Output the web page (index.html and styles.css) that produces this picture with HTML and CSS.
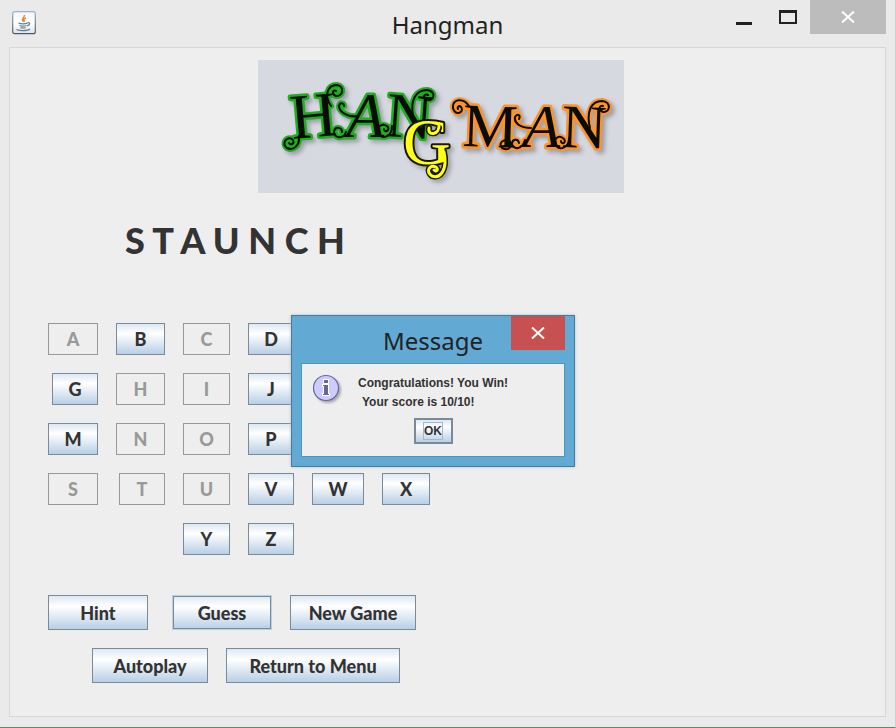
FILE: index.html
```html
<!DOCTYPE html>
<html lang="en">
<head>
<meta charset="utf-8">
<title>Hangman</title>
<link rel="stylesheet" href="styles.css">
</head>
<body>
<div class="window">
  <header class="titlebar">
    <svg class="app-icon" viewBox="0 0 24 24" aria-hidden="true">
      <defs><linearGradient id="tile" x2="0" y2="1"><stop offset="0" stop-color="#f4f6f8"/><stop offset=".5" stop-color="#fff"/><stop offset="1" stop-color="#dfe3e8"/></linearGradient>
      <linearGradient id="edge" x2="0" y2="1"><stop offset="0" stop-color="#9db3c6"/><stop offset="1" stop-color="#475a70"/></linearGradient></defs>
      <rect x=".7" y=".7" width="22.6" height="22" rx="2" fill="url(#tile)" stroke="url(#edge)" stroke-width="1.2"/>
      <path d="M12.500 4c0 3-3 3.500-2 5.500l1 1M14 7c-3 1-2.500 2-1.500 4" fill="none" stroke="#e58a3c" stroke-width="1.5"/>
      <path d="M6.500 12.200c3 .8 6 .8 9 0M7.500 14.500c2 .7 5 .7 7 0M8.500 16.700c2 .5 3 .5 5 0M15.500 11.800c3-1 3 2.200-.5 3M5 18c-1 2 11 2.200 13 0" fill="none" stroke="#5f8298" stroke-width="1.2"/>
    </svg>
    <h1 class="title">Hangman</h1>
    <div class="controls">
      <button class="control" aria-label="Minimize"><svg width="16" height="18" viewBox="0 0 16 18"><path d="M0 15.500h16" stroke="#222" stroke-width="3"/></svg></button>
      <button class="control" aria-label="Maximize"><svg width="18" height="14" viewBox="0 0 18 14"><path d="M1 0v14M17 0v14M0 13h18" stroke="#222" stroke-width="2"/><path d="M0 1.500h18" stroke="#222" stroke-width="3"/></svg></button>
      <button class="control close" aria-label="Close"><svg width="14" height="12" viewBox="0 0 14 12"><path d="M1 .5l12 11M13 .5l-12 11" stroke="#fff" stroke-width="2"/></svg></button>
    </div>
  </header>

  <main class="game">
    <svg class="logo" viewBox="0 0 366 133" role="img" aria-label="Hangman">
      <g class="shade">
        <g class="green">
          <path class="rim" d="M41 76C42 86 35 91 29 88C23 83 29 76 34 79C38 83 33 86 31 83M73 46C66 36 69 25 79 25C87 26 85 37 78 36C73 34 75 29 78 31M88 72C85 80 76 78 76 72C77 66 84 67 84 72M100 56C89 58 81 51 81 46C82 42 86 43 86 46M155 56C152 40 158 30 169 30C179 31 176 42 169 40C164 38 166 33 170 35M134 66C134 78 124 79 120 74C117 67 125 62 130 67C132 71 126 73 126 69"/>
          <text x="34" y="79" transform="rotate(-5 34 79)">H</text>
          <text class="lean" x="88" y="77">A</text>
          <text x="127" y="76" transform="rotate(4 127 76)">N</text>
          <path class="curl" d="M41 76C42 86 35 91 29 88C23 83 29 76 34 79C38 83 33 86 31 83M73 46C66 36 69 25 79 25C87 26 85 37 78 36C73 34 75 29 78 31M88 72C85 80 76 78 76 72C77 66 84 67 84 72M100 56C89 58 81 51 81 46C82 42 86 43 86 46M155 56C152 40 158 30 169 30C179 31 176 42 169 40C164 38 166 33 170 35M134 66C134 78 124 79 120 74C117 67 125 62 130 67C132 71 126 73 126 69"/>
        </g>
        <g class="orange">
          <path class="rim" d="M211 46C205 37 194 39 195 48C197 57 207 52 203 47C201 45 199 47 200 49M249 76C257 88 250 91 244 88C240 83 246 78 250 82M267 80C264 90 256 90 254 84C254 79 260 78 261 83M273 68C262 68 256 63 257 57C259 53 263 55 261 59M332 68C328 52 333 41 344 41C354 42 352 53 345 52C340 50 341 45 345 46M311 78C311 87 303 91 298 86C294 79 301 74 306 79C309 83 303 85 303 81"/>
          <text x="204" y="86" transform="rotate(2 204 86)">M</text>
          <text class="lean" x="265" y="87">A</text>
          <text x="303" y="87" transform="rotate(2 303 87)">N</text>
          <path class="curl" d="M211 46C205 37 194 39 195 48C197 57 207 52 203 47C201 45 199 47 200 49M249 76C257 88 250 91 244 88C240 83 246 78 250 82M267 80C264 90 256 90 254 84C254 79 260 78 261 83M273 68C262 68 256 63 257 57C259 53 263 55 261 59M332 68C328 52 333 41 344 41C354 42 352 53 345 52C340 50 341 45 345 46M311 78C311 87 303 91 298 86C294 79 301 74 306 79C309 83 303 85 303 81"/>
        </g>
        <g class="yellow">
          <path class="tail-rim" d="M186 92C190 110 182 119 174 116C167 111 172 104 178 107C181 110 178 112 176 110"/>
          <text x="145" y="104">G</text>
          <path class="tail" d="M186 92C190 110 182 119 174 116C167 111 172 104 178 107C181 110 178 112 176 110"/>
          <path class="tail-rim" d="M181 68C179 76 169 74 171 68"/>
          <path class="tail" d="M181 64C182 76 169 76 171 68"/>
        </g>
      </g>
    </svg>

    <p class="word">S T A U N C H</p>

    <div class="letters">
      <button class="key first" disabled>A</button><button class="key">B</button><button class="key" disabled>C</button><button class="key">D</button>
      <button class="key first slim">G</button><button class="key" disabled>H</button><button class="key" disabled>I</button><button class="key">J</button>
      <button class="key first">M</button><button class="key" disabled>N</button><button class="key" disabled>O</button><button class="key">P</button>
      <button class="key first" disabled>S</button><button class="key slim" disabled>T</button><button class="key" disabled>U</button><button class="key">V</button><button class="key">W</button><button class="key">X</button>
      <button class="key third">Y</button><button class="key">Z</button>
    </div>

    <div class="actions">
      <button class="action">Hint</button>
      <button class="action focused">Guess</button>
      <button class="action wide">New Game</button>
    </div>
    <div class="actions second">
      <button class="action medium">Autoplay</button>
      <button class="action widest">Return to Menu</button>
    </div>
  </main>

  <section class="dialog" role="dialog" aria-labelledby="dialog-title">
    <header class="dialog-bar">
      <h2 class="title" id="dialog-title">Message</h2>
      <button class="dialog-close" aria-label="Close message"><svg width="14" height="12" viewBox="0 0 14 12"><path d="M1 .5l12 11M13 .5l-12 11" stroke="#fff" stroke-width="2"/></svg></button>
    </header>
    <div class="dialog-body">
      <div class="message">
        <svg class="info" viewBox="0 0 32 32" aria-hidden="true">
          <circle class="info-disc" cx="14" cy="14" r="12.500" fill="#ccccff" stroke="#666699" stroke-width="1.200"/>
          <path d="M11 5h6v5h-6zM10 10h7v9h1v3h-8v-3h1v-6h-1z" fill="#fff"/>
          <path d="M12 6h4v3h-4zM11 11h5v9h1v1h-6v-1h1v-8h-1z" fill="#666699"/>
        </svg>
        <div class="message-text"><p>Congratulations! You Win!</p><p class="score">Your score is 10/10!</p></div>
      </div>
      <button class="ok"><span class="ok-label">OK</span></button>
    </div>
  </section>
</div>
</body>
</html>
```
FILE: styles.css
```css
* { box-sizing: border-box; }

body {
  margin: 0;
  background: #eaeaea;
  color: #333;
}

button { padding: 0; font: inherit; color: inherit; }
h1, h2, p { margin: 0; }
svg { display: block; }

.window {
  position: relative;
  display: flex;
  flex-direction: column;
  min-height: 100vh;
  padding: 0 9px 10px;
  background: #eaeaea;
  border-right: 1px solid #d0d0d0;
  border-bottom: 1px solid #5c8a68;
}

.titlebar {
  display: grid;
  grid-template-columns: 1fr auto 1fr;
  height: 47px;
}

.app-icon { width: 24px; height: 24px; margin: 11px 0 0 3px; }

.title {
  font: 400 24px/34px "Segoe UI", "Noto Sans", sans-serif;
  color: #222;
}

.titlebar .title { padding-top: 8px; }

.controls { display: flex; justify-content: flex-end; align-items: flex-start; }

.control {
  display: flex;
  align-items: center;
  justify-content: center;
  width: 44px;
  height: 34px;
  border: 0;
  background: none;
}

.close { width: 76px; background: #bcbcbc; }

.game {
  flex: 1;
  padding: 12px 38px 33px;
  background: #eee;
  border: 1px solid #d8d8d8;
}

.logo {
  width: 366px;
  height: 133px;
  margin-left: 210px;
  background: #d6d9e0;
}

.logo text { font: 400 64px "Liberation Serif", serif; paint-order: stroke; stroke-linejoin: round; }
.logo .lean { font-style: italic; }
.shade { filter: drop-shadow(3px 3px 2px #9a9ea8); }
.rim, .curl, .tail, .tail-rim { fill: none; stroke-linecap: round; stroke-linejoin: round; }
.rim { stroke-width: 6px; }
.curl { stroke: #080d08; stroke-width: 2px; }
.green text, .orange text { fill: #080d08; stroke-width: 5px; }
.green .rim, .green text { stroke: #20ae20; }
.orange .rim, .orange text { stroke: #ff9325; }
.orange text { font-size: 62px; }
.logo .yellow text { font-size: 66px; fill: #ffff18; stroke: #161600; stroke-width: 4px; }
.tail-rim { stroke: #161600; stroke-width: 6px; }
.tail { stroke: #ffff18; stroke-width: 3px; }

.word {
  margin: 24px 0 0 77px;
  font: 900 36px/46px Jokerman, Lato, sans-serif;
}

.letters {
  display: grid;
  grid-template-columns: 50px 49px 47px 46px 52px 48px;
  grid-auto-rows: 32px;
  gap: 18px;
  margin-top: 60px;
}

.key, .action {
  border: 1px solid #7a8a99;
  background: linear-gradient(#dde8f3, #fff 32%, #b8cfe5);
  font: 900 18px/24px Jokerman, Lato, sans-serif;
}

.key:disabled { background: #eee; border-color: #999; color: #999; }
.slim { width: 46px; justify-self: end; }
.first { grid-column: 1; }
.third { grid-column: 3; }

.actions { display: flex; gap: 18px; margin-top: 40px; }
.second { margin: 18px 0 0 44px; }
.action { width: 100px; height: 35px; }
.focused { margin-left: 6px; border-color: #b8cfe5; box-shadow: inset 0 0 0 1px #7a8a99; }
.medium { width: 116px; }
.wide { width: 126px; }
.widest { width: 174px; }

.dialog {
  position: absolute;
  left: 291px;
  top: 315px;
  width: 284px;
  padding: 0 9px 9px;
  background: #62aad4;
  border: 1px solid #437d9e;
  box-shadow: 0 0 3px #b5c0c8;
}

.dialog-bar {
  display: grid;
  grid-template-columns: 54px 1fr 54px;
  height: 47px;
}

.dialog .title { grid-column: 2; padding-top: 8px; text-align: center; }

.dialog-close {
  display: flex;
  align-items: center;
  justify-content: center;
  height: 34px;
  border: 0;
  background: #c75050;
}

.dialog-body {
  height: 94px;
  padding: 10px;
  background: #eee;
  border: 1px solid #4f96bf;
}

.message { display: flex; gap: 14px; }
.info { width: 32px; height: 32px; }
.info-disc { filter: drop-shadow(2px 2px 1px #aaa); }
.message-text { font: 700 12px/19px "Liberation Sans", Arial, sans-serif; white-space: nowrap; }
.message-text .score { padding-left: 4px; }

.ok {
  display: block;
  width: 39px;
  height: 26px;
  margin: 6px auto 0;
  border: 2px solid #7a8a99;
  background: linear-gradient(#dde8f3, #fff 32%, #b8cfe5);
  font: 700 12px/16px "Liberation Sans", Arial, sans-serif;
}

.ok-label { display: inline-block; border: 1px solid #a3b8cc; }
```
